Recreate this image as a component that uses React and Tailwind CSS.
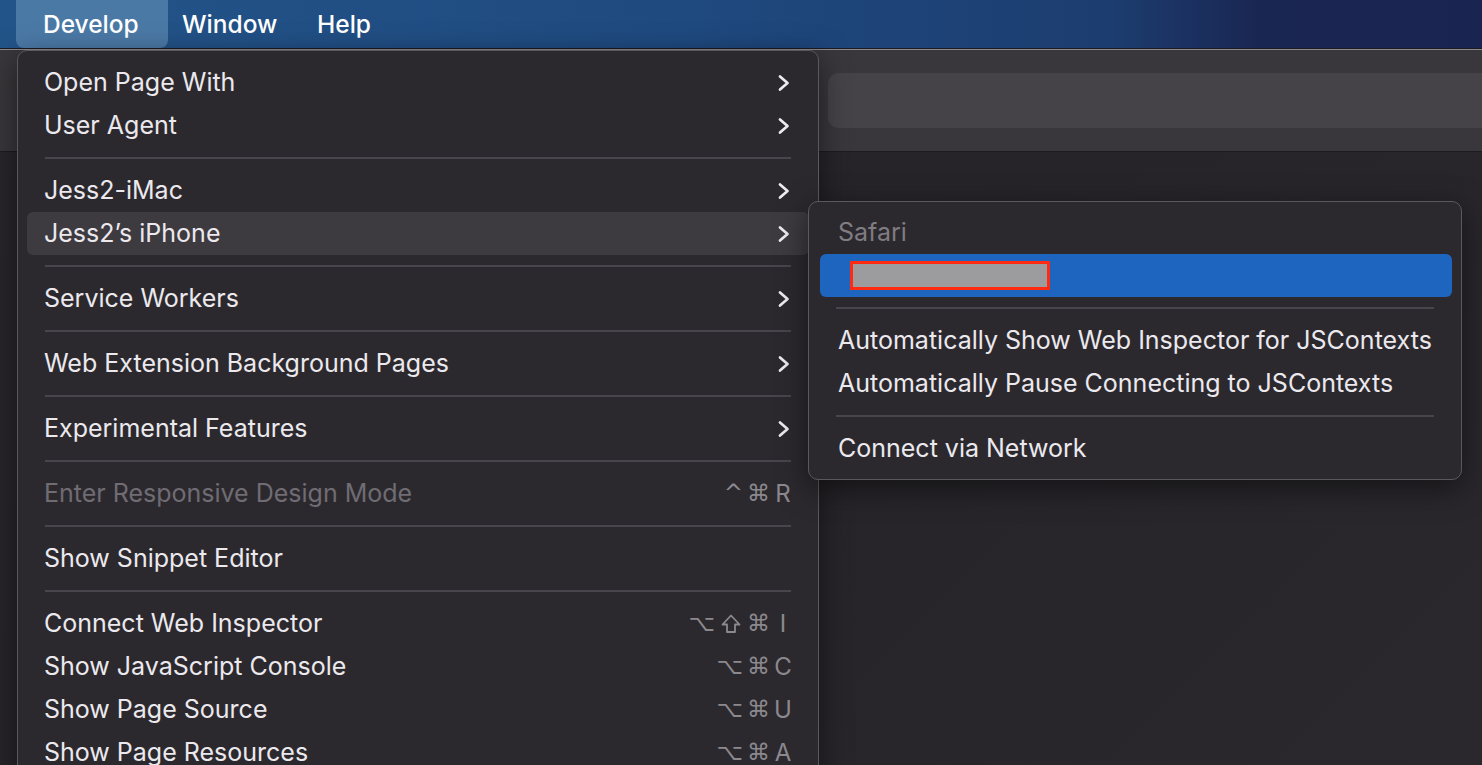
import React from "react";

const Chevron = () => (
  <svg width="14" height="18" viewBox="0 0 14 18" fill="none">
    <path d="M3 2.5 L10.5 9 L3 15.5" stroke="#ecebee" strokeWidth="2.7" strokeLinecap="round" strokeLinejoin="round" />
  </svg>
);

const ShiftIcon = () => (
  <svg width="22" height="22" viewBox="0 0 22 22" fill="none" className="mx-[3px]">
    <path d="M11 2.5 L19.5 11.5 H15 V19 H7 V11.5 H2.5 Z" stroke="#8b888e" strokeWidth="1.8" strokeLinejoin="round" />
  </svg>
);

function Shortcut({ mods, k }) {
  return (
    <div className="flex items-center text-[#8b888e] font-['DejaVu_Sans',sans-serif] text-[23px] -mr-[3px]">
      {mods.map((m, i) =>
        m === "shift" ? <ShiftIcon key={i} /> : <span key={i} className="px-[2px]">{m}</span>
      )}
      <span className="w-[22px] text-center font-['Inter',sans-serif] text-[24px]">{k}</span>
    </div>
  );
}

function Item({ label, arrow, shortcut, disabled, active }) {
  return (
    <div
      className={`h-[43px] mx-[9px] pl-[17px] pr-[18px] rounded-[6px] flex items-center justify-between ${
        active ? "bg-[#3d3a40]" : ""
      }`}
    >
      <span className={disabled ? "text-[#6f6c73]" : "text-[#ebe9ed]"}>{label}</span>
      {arrow && <Chevron />}
      {shortcut}
    </div>
  );
}

const Sep = () => (
  <div className="h-[22px] mx-[27px] flex items-center">
    <div className="h-[2px] w-full bg-[#48464c]" />
  </div>
);

export default function App() {
  return (
    <div className="relative w-[1482px] h-[765px] overflow-hidden bg-[#27252a] font-['Inter','Noto_Sans',sans-serif] text-[25px] flex flex-col">
      {/* menu bar */}
      <div className="h-[48px] flex items-stretch text-white text-[24.5px] bg-[linear-gradient(90deg,#235489_0%,#1f4a80_45%,#1c3d70_75%,#1a2652_85%,#1a2450_100%)]">
        <div className="w-[16px]" />
        <div className="w-[152px] rounded-b-[8px] bg-[#4b79a6] flex items-center pl-[27px] font-medium">Develop</div>
        <div className="w-[149px] flex items-center pl-[14px] font-medium">Window</div>
        <div className="flex items-center font-medium">Help</div>
      </div>
      <div className="h-[1px] bg-[#1b1a1e]" />
      <div className="h-[1px] bg-[#8c8a8f]" />

      {/* window toolbar */}
      <div className="h-[101px] bg-[#39373b] pt-[23px] pl-[828px]">
        <div className="h-[55px] rounded-l-[10px] bg-[#454347]" />
      </div>
      <div className="h-[1px] bg-[#1c1b1e]" />
      <div className="flex-1 bg-[linear-gradient(135deg,#28262b,#262429_50%,#2a282d)]" />

      {/* Develop menu */}
      <div className="absolute left-[17px] top-[50px] w-[802px] h-[740px] rounded-t-[10px] border border-[#5a585d] bg-[#2c292e] pt-[10px] shadow-[0_8px_30px_rgba(0,0,0,0.5)]">
        <Item label="Open Page With" arrow />
        <Item label="User Agent" arrow />
        <Sep />
        <Item label="Jess2-iMac" arrow />
        <Item label="Jess2’s iPhone" arrow active />
        <Sep />
        <Item label="Service Workers" arrow />
        <Sep />
        <Item label="Web Extension Background Pages" arrow />
        <Sep />
        <Item label="Experimental Features" arrow />
        <Sep />
        <Item label="Enter Responsive Design Mode" disabled shortcut={<Shortcut mods={["^", "⌘"]} k="R" />} />
        <Sep />
        <Item label="Show Snippet Editor" />
        <Sep />
        <Item label="Connect Web Inspector" shortcut={<Shortcut mods={["⌥", "shift", "⌘"]} k="I" />} />
        <Item label="Show JavaScript Console" shortcut={<Shortcut mods={["⌥", "⌘"]} k="C" />} />
        <Item label="Show Page Source" shortcut={<Shortcut mods={["⌥", "⌘"]} k="U" />} />
        <Item label="Show Page Resources" shortcut={<Shortcut mods={["⌥", "⌘"]} k="A" />} />
      </div>

      {/* device submenu */}
      <div className="absolute left-[808px] top-[201px] w-[654px] rounded-[10px] border border-[#5a585d] bg-[#2c292e] py-[9px] shadow-[0_8px_30px_rgba(0,0,0,0.5)]">
        <div className="h-[43px] px-[29px] flex items-center text-[#7f7c82]">Safari</div>
        <div className="h-[43px] ml-[11px] mr-[9px] rounded-[6px] bg-[#1d65be] flex items-center pl-[30px]">
          <div className="w-[200px] h-[29px] border-[3px] border-[#ff2a12] bg-[#9c9b9e]" />
        </div>
        <div className="h-[22px] mx-[27px] flex items-center">
          <div className="h-[2px] w-full bg-[#48464c]" />
        </div>
        <div className="h-[43px] px-[29px] flex items-center text-[#ebe9ed] whitespace-nowrap">Automatically Show Web Inspector for JSContexts</div>
        <div className="h-[43px] px-[29px] flex items-center text-[#ebe9ed]">Automatically Pause Connecting to JSContexts</div>
        <div className="h-[22px] mx-[27px] flex items-center">
          <div className="h-[2px] w-full bg-[#48464c]" />
        </div>
        <div className="h-[43px] px-[29px] flex items-center text-[#ebe9ed]">Connect via Network</div>
      </div>
    </div>
  );
}
